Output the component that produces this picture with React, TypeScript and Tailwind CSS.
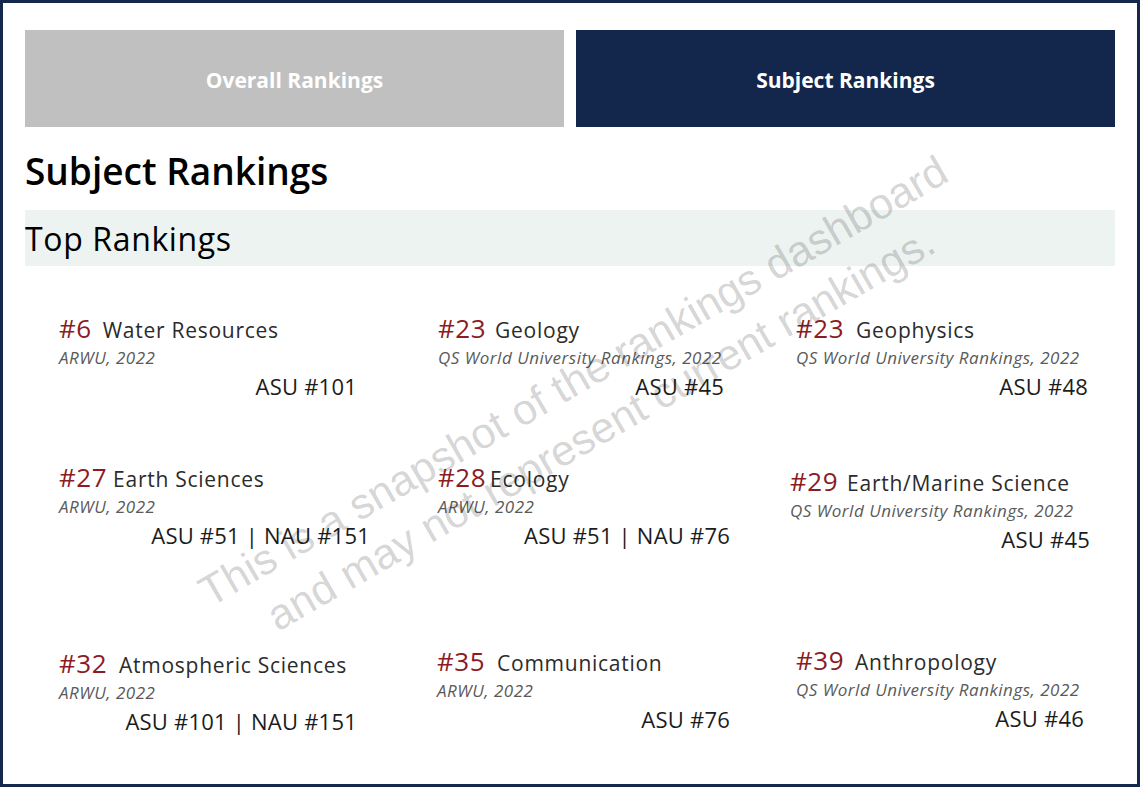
type Ranking = {
  rank: string
  subject: string
  source: string
  result: string
  gap: string
  box: string
}

const rankings: Ranking[] = [
  { rank: "#6", subject: "Water Resources", source: "ARWU, 2022", result: "ASU #101", gap: "ml-[11px]", box: "w-[298px]" },
  { rank: "#23", subject: "Geology", source: "QS World University Rankings, 2022", result: "ASU #45", gap: "ml-[9px]", box: "w-[286px]" },
  { rank: "#23", subject: "Geophysics", source: "QS World University Rankings, 2022", result: "ASU #48", gap: "ml-[12px]", box: "w-[292px]" },
  { rank: "#27", subject: "Earth Sciences", source: "ARWU, 2022", result: "ASU #51 | NAU #151", gap: "ml-[6px]", box: "w-[311px]" },
  { rank: "#28", subject: "Ecology", source: "ARWU, 2022", result: "ASU #51 | NAU #76", gap: "ml-[4px]", box: "w-[292px]" },
  { rank: "#29", subject: "Earth/Marine Science", source: "QS World University Rankings, 2022", result: "ASU #45", gap: "ml-[9px]", box: "w-[300px] -ml-[6px] mt-[4px]" },
  { rank: "#32", subject: "Atmospheric Sciences", source: "ARWU, 2022", result: "ASU #101 | NAU #151", gap: "ml-[12px]", box: "w-[298px]" },
  { rank: "#35", subject: "Communication", source: "ARWU, 2022", result: "ASU #76", gap: "ml-[12px]", box: "w-[293px] -ml-[1px] -mt-[2px]" },
  { rank: "#39", subject: "Anthropology", source: "QS World University Rankings, 2022", result: "ASU #46", gap: "ml-[11px]", box: "w-[288px] -mt-[3px]" },
]

function RankingCard({ item }: { item: Ranking }) {
  return (
    <div className={`flex flex-col ${item.box}`}>
      <div className="flex items-baseline whitespace-nowrap leading-[28px]">
        <span className="text-[26px] tracking-[0.02em] text-[#8b1c24]">{item.rank}</span>
        <span className={`text-[21px] tracking-[0.035em] text-[#2b2b2b] ${item.gap}`}>{item.subject}</span>
      </div>
      <div className="whitespace-nowrap text-[17px] italic leading-[28px] tracking-[0.03em] text-[#5a5a5a]">
        {item.source}
      </div>
      <div className="whitespace-nowrap text-right text-[22px] leading-[28px] tracking-[0.01em] text-[#1c1c1c]">
        {item.result}
      </div>
    </div>
  )
}

export default function App() {
  return (
    <div className="relative h-[787px] w-[1140px] overflow-hidden border-[3px] border-[#14284b] bg-white px-[22px] pt-[27px] font-['Open_Sans',sans-serif]">
      <div className="flex gap-[12px]">
        <div className="flex h-[97px] flex-1 items-center justify-center bg-[#c0c0c0] pt-[4px] text-[21px] font-bold text-white">
          Overall Rankings
        </div>
        <div className="flex h-[97px] flex-1 items-center justify-center bg-[#13264b] pt-[4px] text-[21px] font-bold text-white">
          Subject Rankings
        </div>
      </div>

      <h1 className="mt-[20px] text-[37px] font-semibold leading-[48px] text-black">Subject Rankings</h1>

      <div className="mt-[15px] flex h-[56px] items-center bg-[#ecf3f1]">
        <h2 className="pt-[2px] text-[32px] leading-[40px] tracking-[0.02em] text-black">Top Rankings</h2>
      </div>

      <div className="mt-[48px] grid grid-cols-[379px_358px_1fr] grid-rows-[149px_186px_auto] pl-[34px]">
        {rankings.map((item, index) => (
          <RankingCard key={index} item={item} />
        ))}
      </div>

      <div className="pointer-events-none absolute left-[584px] top-[402px] -translate-x-1/2 -translate-y-1/2 -rotate-30 whitespace-nowrap text-center font-['Liberation_Sans',Arial,sans-serif] text-[43px] leading-[55px] text-black/[0.18]">
        <div>This is a snapshot of the rankings dashboard</div>
        <div>and may not represent current rankings.</div>
      </div>
    </div>
  )
}
